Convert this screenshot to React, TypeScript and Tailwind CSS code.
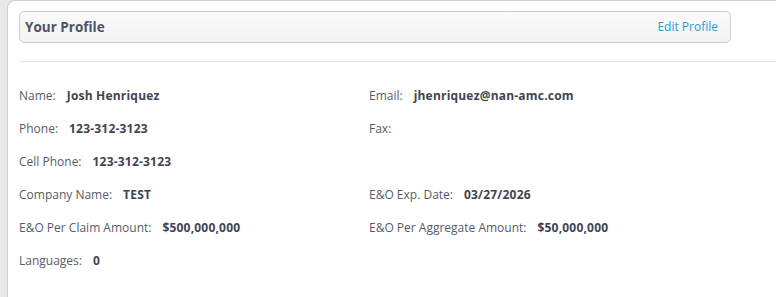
import React from "react"

const rows: [string, string, string?, string?][] = [
    ["Name:", "Josh Henriquez", "Email:", "jhenriquez@nan-amc.com"],
    ["Phone:", "123-312-3123", "Fax:", ""],
    ["Cell Phone:", "123-312-3123"],
    ["Company Name:", "TEST", "E&O Exp. Date:", "03/27/2026"],
    ["E&O Per Claim Amount:", "$500,000,000", "E&O Per Aggregate Amount:", "$50,000,000"],
    ["Languages:", "0"],
]

const Field: React.FC<{ label?: string; value?: string }> = ({ label, value }) => {
    if (!label) return <div />
    return (
        <div className="flex items-center h-[33px]">
            <span className="text-[#565c66]">{label}</span>
            {value ? <span className="ml-[11px] font-bold text-[#3f4550] tracking-[0.2px]">{value}</span> : null}
        </div>
    )
}

export default function App() {
    return (
        <div className="h-[297px] w-[776px] bg-[#e8e8e8] pl-[7px] overflow-hidden" style={{ fontFamily: '"Open Sans", sans-serif' }}>
            <div className="h-full bg-white rounded-tl-[8px] border-t border-l border-[#cfcfcf] pl-[11px] pt-[10px]">
                <div className="w-[712px] h-[32px] flex items-center justify-between pl-[5px] pr-[12px] border border-[#cdcdcd] rounded-[5px] bg-gradient-to-b from-[#fafafa] to-[#f3f3f3]">
                    <span className="text-[13.5px] font-bold text-[#4d5360]">Your Profile</span>
                    <span className="text-[12px] text-[#2b9bd3]">Edit Profile</span>
                </div>
                <div className="mt-[18px] border-t border-[#e6e6e6]" />
                <div className="pt-[17px] text-[12px]">
                    {rows.map((r, i) => (
                        <div key={i} className="grid grid-cols-[350px_1fr]">
                            <Field label={r[0]} value={r[1]} />
                            <Field label={r[2]} value={r[3]} />
                        </div>
                    ))}
                </div>
            </div>
        </div>
    )
}
